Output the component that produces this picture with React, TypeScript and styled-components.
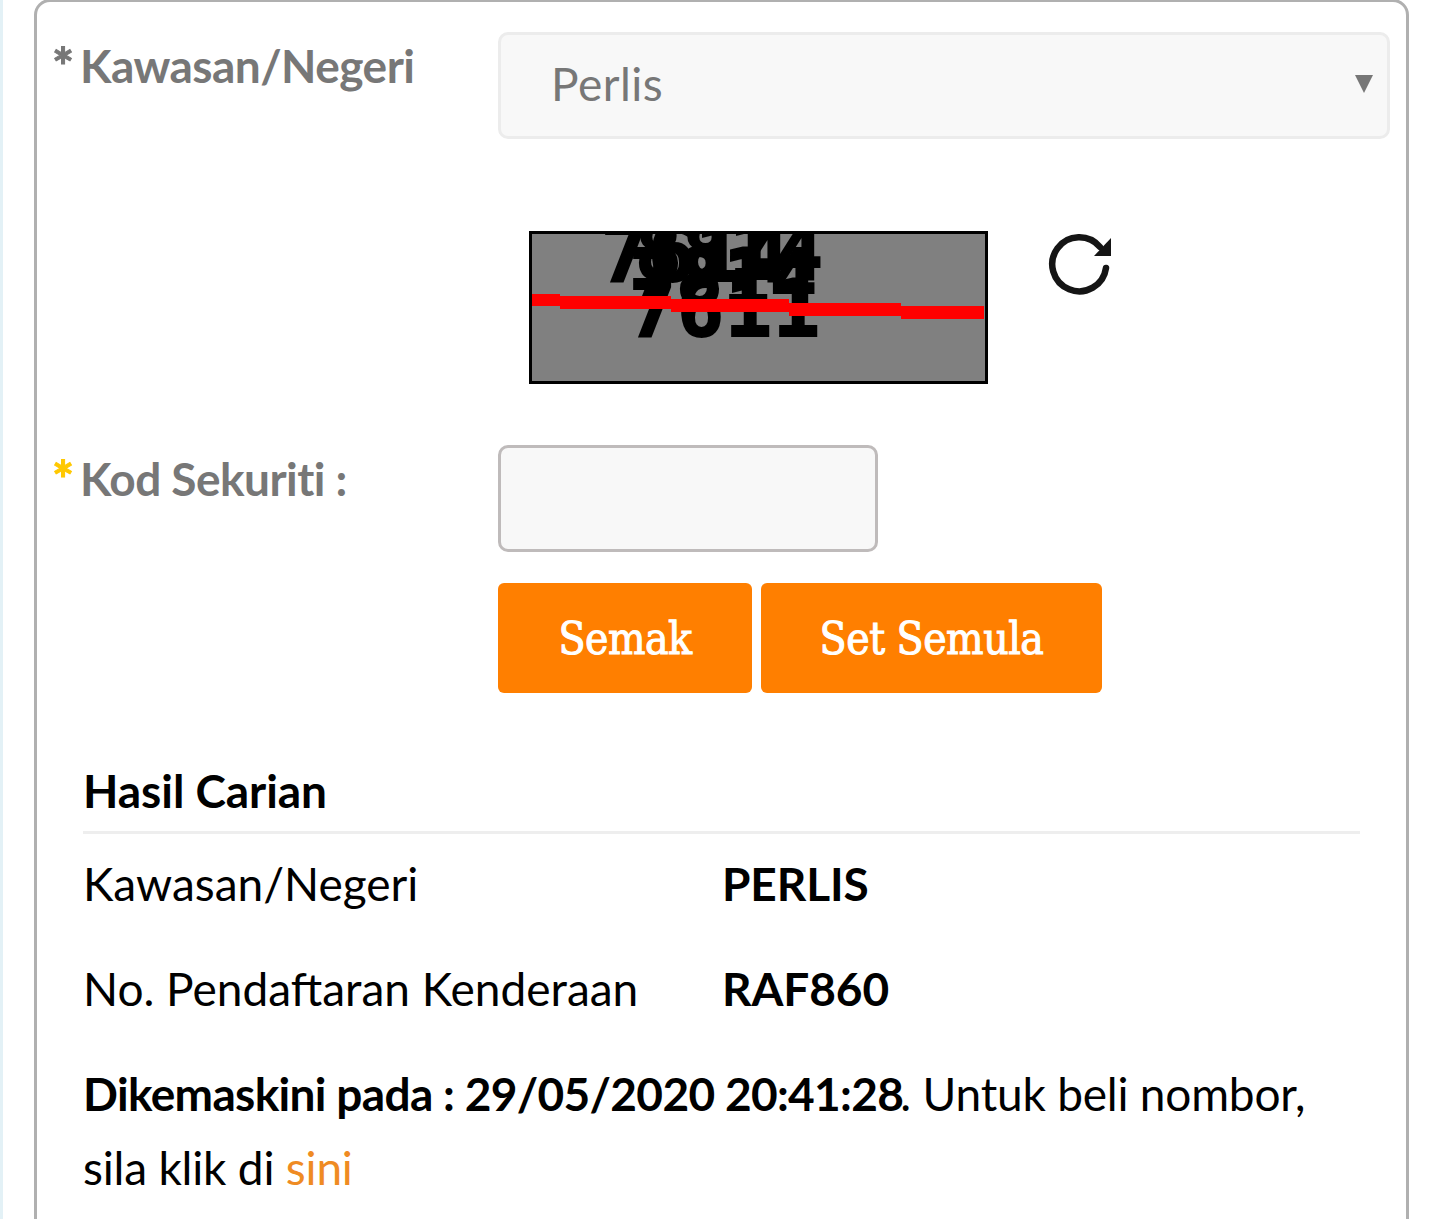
import React from "react";
import styled, { createGlobalStyle } from "styled-components";

const GlobalStyle = createGlobalStyle`
  html, body {
    margin: 0;
    padding: 0;
    background: #ffffff;
    overflow: hidden;
  }
  body {
    font-family: Lato, "Liberation Sans", sans-serif;
  }
`;

const Page = styled.div`
  height: 1219px;
  width: 1440px;
  overflow: hidden;
  box-sizing: border-box;
  padding: 0 31px 0 34px;
  background: linear-gradient(to right, #e3f1f6 0, #e3f1f6 3px, #ffffff 3px);
`;

const Card = styled.div`
  box-sizing: border-box;
  height: 1260px;
  margin-top: -1px;
  border: 3px solid #b0b0b0;
  border-radius: 16px;
  padding: 30px 16px 0 16px;
  background: #fff;
`;

const FormRow = styled.div`
  display: flex;
  align-items: flex-start;
`;

const Label = styled.label`
  width: 445px;
  flex: none;
  display: flex;
  font-size: 46px;
  line-height: 60px;
  font-weight: 700;
  color: #777777;
  letter-spacing: -0.55px;
  margin-top: 4px;
`;

const Star = styled.span<{ $color: string }>`
  width: 28px;
  margin-left: -1px;
  flex: none;
  font-size: 52px;
  line-height: 60px;
  letter-spacing: 0;
  color: ${({ $color }) => $color};
  -webkit-text-stroke: 1px ${({ $color }) => $color};
`;

const Select = styled.div`
  box-sizing: border-box;
  width: 894px;
  height: 107px;
  display: flex;
  align-items: center;
  justify-content: space-between;
  padding: 0 14px 4px 50px;
  border: 3px solid #ececec;
  border-radius: 10px;
  background: #f8f8f8;
  font-size: 46px;
  letter-spacing: 0.5px;
  color: #777777;
`;

const Caret = styled.svg`
  width: 18px;
  height: 18px;
  display: block;
`;

const CaptchaRow = styled.div`
  display: flex;
  align-items: flex-start;
  margin: 92px 0 0 476px;
  gap: 60px;
`;

const CaptchaImage = styled.svg`
  width: 459px;
  height: 153px;
  display: block;
  flex: none;
`;

const RefreshIcon = styled.svg`
  width: 64px;
  height: 64px;
  display: block;
  margin-top: 1px;
`;

const CodeRow = styled(FormRow)`
  margin-top: 61px;
`;

const Input = styled.input`
  box-sizing: border-box;
  width: 380px;
  height: 107px;
  border: 3px solid #bfbbbb;
  border-radius: 10px;
  background: #f8f8f8;
  outline: none;
`;

const Buttons = styled.div`
  display: flex;
  gap: 9px;
  margin: 31px 0 0 445px;
`;

const Button = styled.button<{ $width: number }>`
  width: ${({ $width }) => $width}px;
  height: 110px;
  padding: 0;
  border: none;
  border-radius: 6px;
  background: #ff7f00;
  color: #ffffff;
  font-family: "DejaVu Serif", "Liberation Serif", serif;
  font-stretch: condensed;
  font-size: 44px;
  font-weight: 400;
  letter-spacing: -0.5px;
  -webkit-text-stroke: 1px #ffffff;
`;

const Results = styled.section`
  padding: 0 30px;
  margin-top: 67px;
  color: #000000;
`;

const ResultTitle = styled.h3`
  margin: 0;
  height: 71px;
  border-bottom: 3px solid #eeeeee;
  font-size: 46px;
  line-height: 62px;
  font-weight: 700;
  letter-spacing: -0.05px;
`;

const ResultRow = styled.div`
  box-sizing: border-box;
  display: flex;
  height: 105px;
  padding-bottom: 6px;
  align-items: center;
  font-size: 46px;
`;

const ResultName = styled.span`
  width: 639px;
  flex: none;
`;

const ResultValue = styled.strong`
  font-weight: 700;
  letter-spacing: -0.1px;
`;

const Note = styled.p`
  margin: 13px 0 0;
  font-size: 46px;
  line-height: 74px;
  width: 1260px;
  letter-spacing: -0.2px;
`;

const NoteBold = styled.strong`
  font-weight: 700;
  letter-spacing: -0.67px;
  margin-right: -3px;
`;

const NoteLink = styled.a`
  color: #ef8b23;
  text-decoration: none;
`;

const App = () => {
  return (
    <Page>
      <GlobalStyle />
      <Card>
        <FormRow>
          <Label>
            <Star $color="#777777">*</Star>
            Kawasan/Negeri
          </Label>
          <Select>
            Perlis
            <Caret viewBox="0 0 18 18">
              <path d="M0 0H18L9 18Z" fill="#777777" />
            </Caret>
          </Select>
        </FormRow>

        <CaptchaRow>
          <CaptchaImage viewBox="0 0 459 153">
            <rect x="1.5" y="1.5" width="456" height="150" fill="#808080" stroke="#000" strokeWidth="3" />
            <g
              fontFamily="'DejaVu Sans Mono', monospace"
              fontWeight="700"
              fontSize="78"
              fill="#000"
              stroke="#000"
              strokeWidth="2"
            >
              <text x="72" y="50">7614</text>
              <text x="106" y="48">8814</text>
              <text x="100" y="74">7814</text>
              <text x="100" y="105" letterSpacing="1">7611</text>
            </g>
            <path d="M3 63H31V65H142V68H260V72H372V75H455V88H372V85H260V81H142V78H31V75H3Z" fill="#ff0000" />
          </CaptchaImage>
          <RefreshIcon viewBox="0 0 64 64">
            <path d="M52 15A27 27 0 1 0 58 36" fill="none" stroke="#151515" strokeWidth="6.5" strokeLinecap="round" />
            <path d="M63 6V24H46Z" fill="#151515" />
          </RefreshIcon>
        </CaptchaRow>

        <CodeRow>
          <Label>
            <Star $color="#ffc800">*</Star>
            Kod Sekuriti :
          </Label>
          <Input aria-label="Kod Sekuriti" />
        </CodeRow>

        <Buttons>
          <Button $width={254}>Semak</Button>
          <Button $width={341}>Set Semula</Button>
        </Buttons>

        <Results>
          <ResultTitle>Hasil Carian</ResultTitle>
          <ResultRow>
            <ResultName>Kawasan/Negeri</ResultName>
            <ResultValue>PERLIS</ResultValue>
          </ResultRow>
          <ResultRow>
            <ResultName>No. Pendaftaran Kenderaan</ResultName>
            <ResultValue>RAF860</ResultValue>
          </ResultRow>
          <Note>
            <NoteBold>Dikemaskini pada : 29/05/2020 20:41:28</NoteBold>. Untuk beli nombor, sila klik di{" "}
            <NoteLink href="#">sini</NoteLink>
          </Note>
        </Results>
      </Card>
    </Page>
  );
};

export default App;
